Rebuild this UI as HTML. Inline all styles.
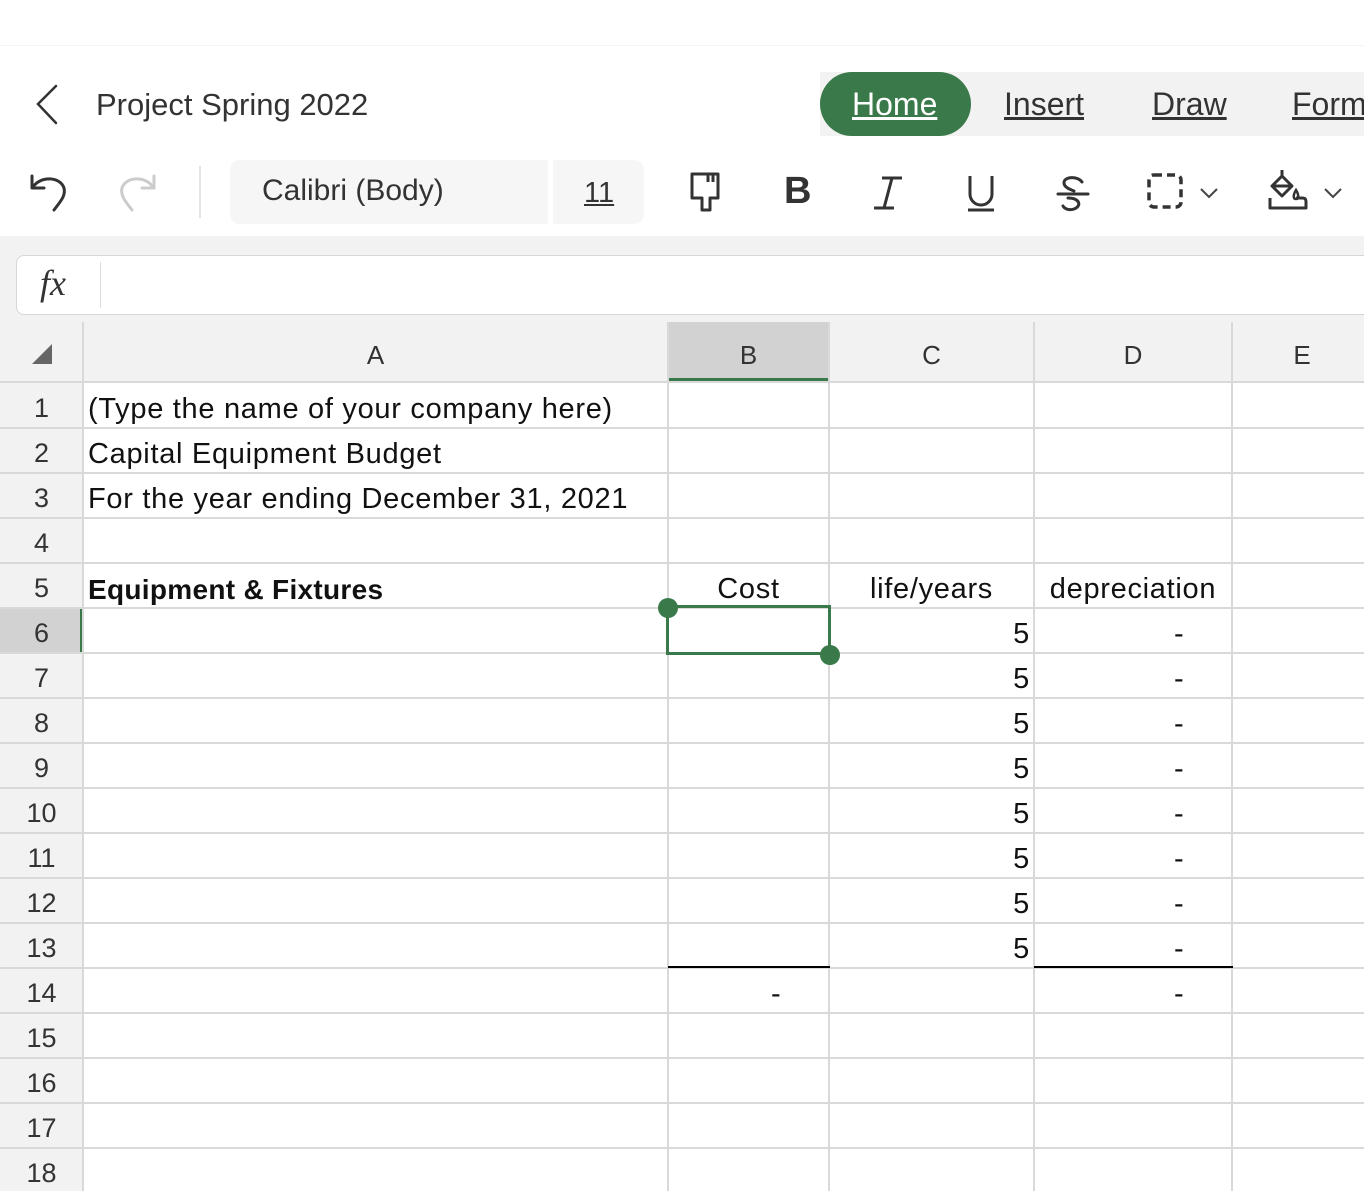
<!DOCTYPE html>
<html><head><meta charset="utf-8">
<style>
*{margin:0;padding:0;box-sizing:border-box}
body{width:1364px;height:1191px;overflow:hidden;background:#fff;font-family:"Liberation Sans",sans-serif;color:#222;position:relative}
.a{position:absolute}
.t{font-size:27px;white-space:nowrap}
.hl{position:absolute;left:0;width:1364px;height:2px;background:#d9d9d9}
.vl{position:absolute;top:322px;width:2px;height:869px;background:#d9d9d9}
.rn{position:absolute;left:0;width:83px;text-align:center;font-size:27px;color:#333;line-height:45px}
.c{position:absolute;font-size:29px;letter-spacing:.7px;line-height:45px;color:#111;white-space:nowrap}
.ch{position:absolute;top:322px;height:60px;line-height:66px;text-align:center;font-size:26px;color:#333}
</style></head><body>
<div class="a" style="left:0;top:0;width:1364px;height:46px;background:#fff;border-bottom:1px solid #f5f5f5"></div>
<svg class="a" style="left:30px;top:82px" width="34" height="44"><path d="M26 4 L8 22 L26 41" fill="none" stroke="#333" stroke-width="2.5" stroke-linecap="round"/></svg>
<div class="a t" style="left:96px;top:87px;font-size:31px;color:#333">Project Spring 2022</div>
<div class="a" style="left:820px;top:72px;width:544px;height:64px;background:#f2f2f2"></div>
<div class="a" style="left:820px;top:72px;width:151px;height:64px;background:#3a7a4a;border-radius:32px"></div>
<div class="a t" style="left:852px;top:86px;font-size:32px;color:#fff;text-decoration:underline">Home</div>
<div class="a t" style="left:1004px;top:86px;font-size:32px;color:#333;text-decoration:underline">Insert</div>
<div class="a t" style="left:1152px;top:86px;font-size:32px;color:#333;text-decoration:underline">Draw</div>
<div class="a t" style="left:1292px;top:86px;font-size:32px;color:#333;text-decoration:underline">Form</div>
<svg class="a" style="left:26px;top:168px" width="44" height="46"><path d="M6 8 V20 H18 M7 19 C14 8 34 8 38 20 C40 28 34 34 28 42" fill="none" stroke="#333" stroke-width="3" stroke-linecap="round" stroke-linejoin="round"/></svg>
<svg class="a" style="left:116px;top:168px" width="44" height="46"><path d="M38 8 V20 H26 M37 19 C30 8 10 8 6 20 C4 28 10 34 16 42" fill="none" stroke="#ccc" stroke-width="3" stroke-linecap="round" stroke-linejoin="round"/></svg>
<div class="a" style="left:199px;top:166px;width:2px;height:52px;background:#e5e5e5"></div>
<div class="a" style="left:230px;top:160px;width:318px;height:64px;background:#f6f6f6;border-radius:10px 0 0 10px"></div>
<div class="a" style="left:553px;top:160px;width:91px;height:64px;background:#f6f6f6;border-radius:0 10px 10px 0"></div>
<div class="a t" style="left:262px;top:174px;font-size:30px;color:#333">Calibri (Body)</div>
<div class="a t" style="left:584px;top:177px;font-size:29px;color:#333;text-decoration:underline">11</div>
<svg class="a" style="left:688px;top:170px" width="36" height="44"><path d="M4 4 H30 V28 H22 V40 H14 V28 H4 Z M20 4 V12 M25 4 V12" fill="none" stroke="#333" stroke-width="3" stroke-linejoin="round"/></svg>
<div class="a" style="left:784px;top:170px;font-size:38px;font-weight:bold;color:#333">B</div>
<svg class="a" style="left:870px;top:174px" width="36" height="40"><path d="M12 4 H32 M4 34 H24 M22 4 L14 34" stroke="#333" stroke-width="3" fill="none"/></svg>
<svg class="a" style="left:964px;top:174px" width="34" height="40"><path d="M6 2 V20 A11 11 0 0 0 28 20 V2 M4 36 H30" stroke="#333" stroke-width="3" fill="none"/></svg>
<svg class="a" style="left:1054px;top:174px" width="38" height="40"><path d="M28 8 C24 2 10 2 10 9 C10 14 18 16 20 17 M4 20 H34 M14 24 C26 24 28 32 20 35 C14 37 10 34 9 32" stroke="#333" stroke-width="3" fill="none" stroke-linecap="round"/></svg>
<svg class="a" style="left:1146px;top:172px" width="40" height="40"><rect x="3" y="3" width="32" height="32" rx="5" fill="none" stroke="#333" stroke-width="3.5" stroke-dasharray="8 5"/></svg>
<svg class="a" style="left:1199px;top:186px" width="20" height="14"><path d="M2 3 L10 11 L18 3" fill="none" stroke="#444" stroke-width="2"/></svg>
<svg class="a" style="left:1266px;top:168px" width="46" height="46"><path d="M16 2 V8 M16 8 L26 18 L16 28 L6 18 Z M6 18 H26 M4 30 V40 H40 V34 C40 30 38 30 36 30 H30" fill="none" stroke="#333" stroke-width="3" stroke-linejoin="round"/><path d="M30 22 C27 27 27 31 30 31 C33 31 33 27 30 22Z" fill="none" stroke="#333" stroke-width="2.5"/></svg>
<svg class="a" style="left:1323px;top:186px" width="20" height="14"><path d="M2 3 L10 11 L18 3" fill="none" stroke="#444" stroke-width="2"/></svg>
<div class="a" style="left:0;top:236px;width:1364px;height:86px;background:#f2f2f2"></div>
<div class="a" style="left:16px;top:255px;width:1360px;height:60px;background:#fff;border:1px solid #d6d6d6;border-radius:8px"></div>
<div class="a" style="left:100px;top:262px;width:1px;height:46px;background:#ddd"></div>
<div class="a" style="left:40px;top:262px;font-family:'Liberation Serif',serif;font-style:italic;font-size:36px;color:#333">fx</div>
<div class="a" style="left:0;top:322px;width:1364px;height:60px;background:#f2f2f2"></div>
<div class="a" style="left:668px;top:322px;width:161px;height:60px;background:#d2d2d2"></div>
<div class="a" style="left:668px;top:378px;width:161px;height:4px;background:#3a7a4a"></div>
<svg class="a" style="left:30px;top:342px" width="24" height="24"><path d="M22 2 V22 H2 Z" fill="#666"/></svg>
<div class="a" style="left:0;top:382px;width:83px;height:809px;background:#f2f2f2"></div>
<div class="a" style="left:0;top:607px;width:83px;height:45px;background:#d2d2d2"></div>
<div class="a" style="left:80px;top:607px;width:3px;height:45px;background:#3a7a4a"></div>
<div class="ch" style="left:83px;width:585px">A</div>
<div class="ch" style="left:668px;width:161px">B</div>
<div class="ch" style="left:829px;width:205px">C</div>
<div class="ch" style="left:1034px;width:198px">D</div>
<div class="ch" style="left:1232px;width:140px">E</div>
<div class="hl" style="top:381px"></div>
<div class="hl" style="top:427px"></div><div class="hl" style="top:472px"></div><div class="hl" style="top:517px"></div>
<div class="hl" style="top:562px"></div><div class="hl" style="top:607px"></div><div class="hl" style="top:652px"></div>
<div class="hl" style="top:697px"></div><div class="hl" style="top:742px"></div><div class="hl" style="top:787px"></div>
<div class="hl" style="top:832px"></div><div class="hl" style="top:877px"></div><div class="hl" style="top:922px"></div>
<div class="hl" style="top:967px"></div><div class="hl" style="top:1012px"></div><div class="hl" style="top:1057px"></div>
<div class="hl" style="top:1102px"></div><div class="hl" style="top:1147px"></div>
<div class="vl" style="left:82px"></div><div class="vl" style="left:667px"></div><div class="vl" style="left:828px"></div>
<div class="vl" style="left:1033px"></div><div class="vl" style="left:1231px"></div>
<div class="rn" style="top:386px">1</div><div class="rn" style="top:431px">2</div><div class="rn" style="top:476px">3</div>
<div class="rn" style="top:521px">4</div><div class="rn" style="top:566px">5</div><div class="rn" style="top:611px">6</div>
<div class="rn" style="top:656px">7</div><div class="rn" style="top:701px">8</div><div class="rn" style="top:746px">9</div>
<div class="rn" style="top:791px">10</div><div class="rn" style="top:836px">11</div><div class="rn" style="top:881px">12</div>
<div class="rn" style="top:926px">13</div><div class="rn" style="top:971px">14</div><div class="rn" style="top:1016px">15</div>
<div class="rn" style="top:1061px">16</div><div class="rn" style="top:1106px">17</div><div class="rn" style="top:1151px">18</div>
<div class="c" style="left:88px;top:387px">(Type the name of your company here)</div>
<div class="c" style="left:88px;top:432px">Capital Equipment Budget</div>
<div class="c" style="left:88px;top:477px">For the year ending December 31, 2021</div>
<div class="c" style="left:88px;top:567px;font-weight:bold;font-size:28px;letter-spacing:.3px">Equipment &amp; Fixtures</div>
<div class="c" style="left:668px;width:161px;text-align:center;top:567px">Cost</div>
<div class="c" style="left:829px;width:205px;text-align:center;top:567px">life/years</div>
<div class="c" style="left:1034px;width:198px;text-align:center;top:567px">depreciation</div>
<div class="c" style="left:829px;width:201px;text-align:right;top:612px">5</div>
<div class="c" style="left:829px;width:201px;text-align:right;top:657px">5</div>
<div class="c" style="left:829px;width:201px;text-align:right;top:702px">5</div>
<div class="c" style="left:829px;width:201px;text-align:right;top:747px">5</div>
<div class="c" style="left:829px;width:201px;text-align:right;top:792px">5</div>
<div class="c" style="left:829px;width:201px;text-align:right;top:837px">5</div>
<div class="c" style="left:829px;width:201px;text-align:right;top:882px">5</div>
<div class="c" style="left:829px;width:201px;text-align:right;top:927px">5</div>
<div class="c" style="left:1174px;top:612px">-</div><div class="c" style="left:1174px;top:657px">-</div>
<div class="c" style="left:1174px;top:702px">-</div><div class="c" style="left:1174px;top:747px">-</div>
<div class="c" style="left:1174px;top:792px">-</div><div class="c" style="left:1174px;top:837px">-</div>
<div class="c" style="left:1174px;top:882px">-</div><div class="c" style="left:1174px;top:927px">-</div>
<div class="c" style="left:1174px;top:972px">-</div>
<div class="c" style="left:771px;top:972px">-</div>
<div class="a" style="left:668px;top:966px;width:162px;height:2px;background:#000"></div>
<div class="a" style="left:1034px;top:966px;width:199px;height:2px;background:#000"></div>
<div class="a" style="left:666px;top:605px;width:165px;height:50px;border:3px solid #3a7a4a"></div>
<div class="a" style="left:658px;top:598px;width:20px;height:20px;border-radius:50%;background:#3a7a4a"></div>
<div class="a" style="left:820px;top:645px;width:20px;height:20px;border-radius:50%;background:#3a7a4a"></div>
</body></html>
